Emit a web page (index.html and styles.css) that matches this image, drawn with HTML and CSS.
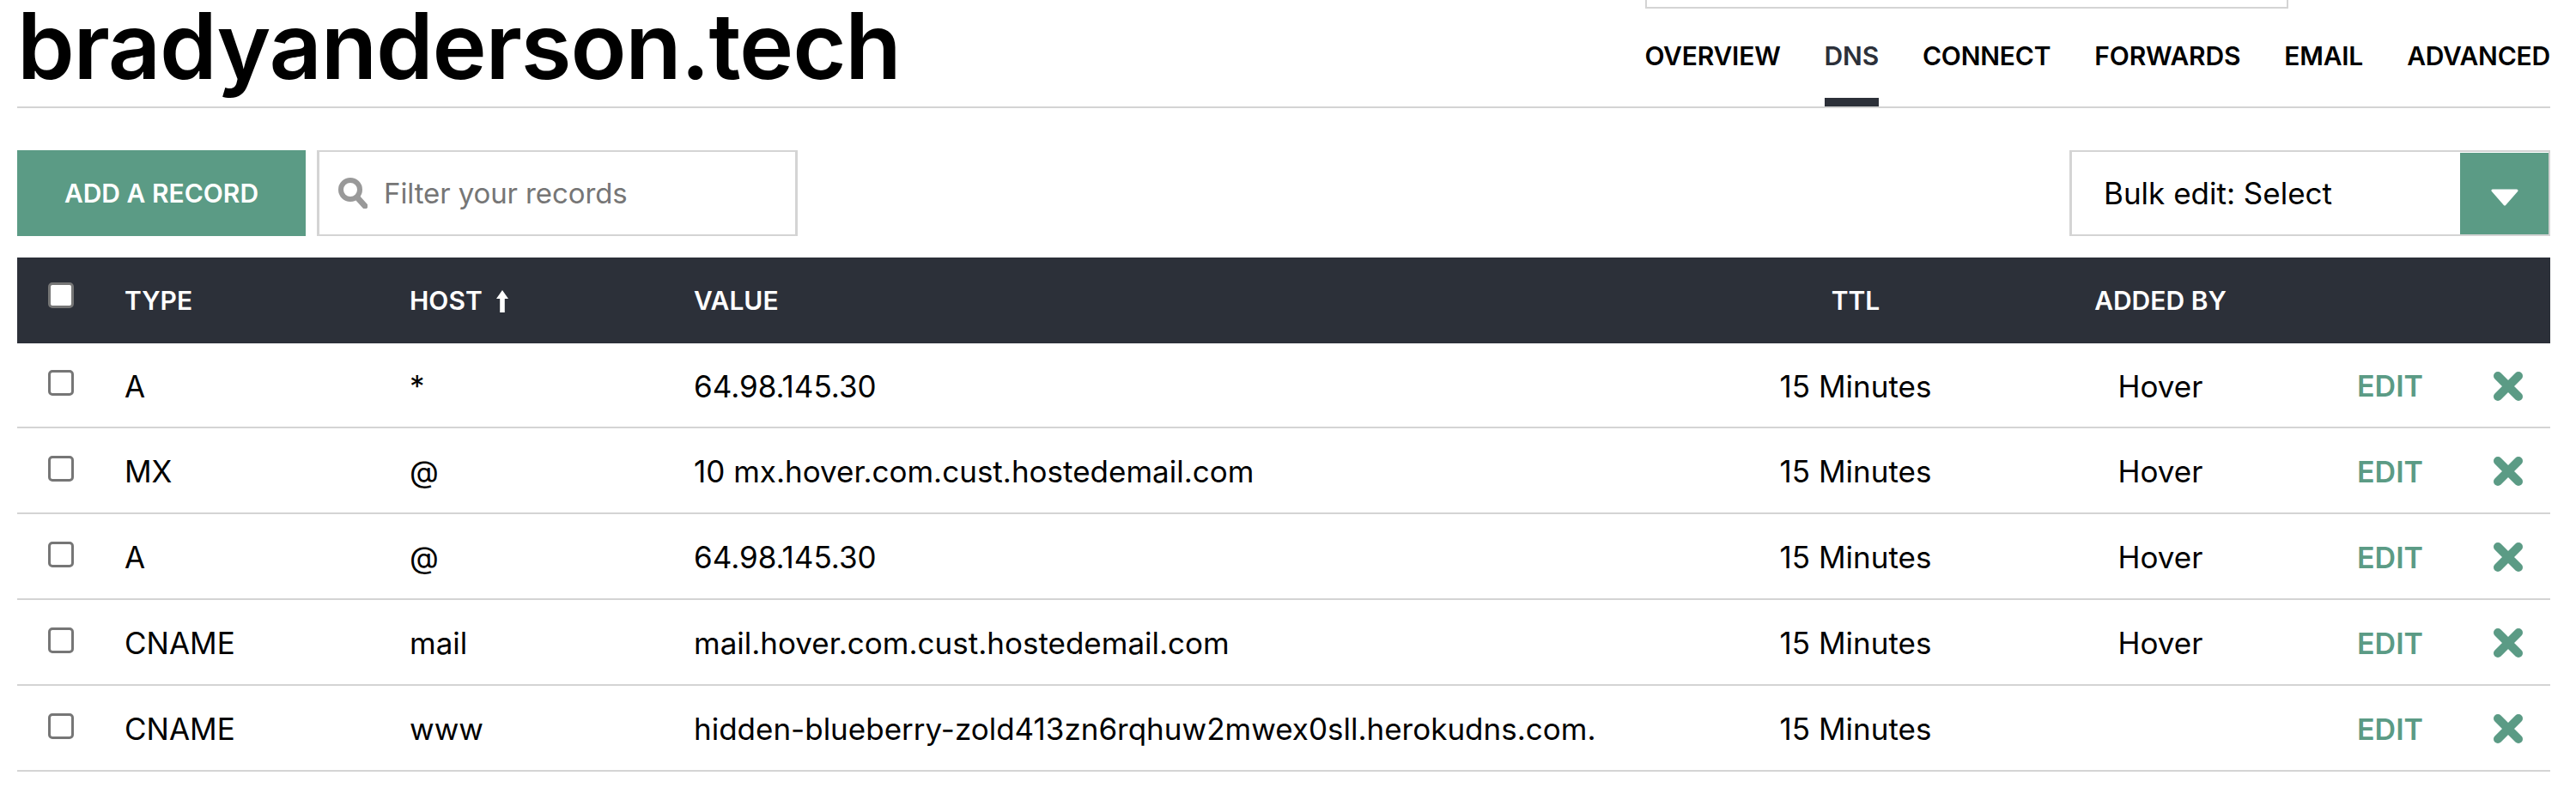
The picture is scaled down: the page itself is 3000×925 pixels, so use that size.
FILE: index.html
```html
<!DOCTYPE html>
<html lang="en">
  <head>
    <meta charset="UTF-8" />
    <title>DNS - bradyanderson.tech</title>
    <link rel="stylesheet" href="styles.css">
  </head>

  <body>
    <div class="wrap">
      <header class="top">
        <h1 class="domain">bradyanderson.tech</h1>
        <div class="top-right">
          <div class="top-search"></div>
          <nav class="tabs">
            <a class="tab">OVERVIEW</a>
            <a class="tab active">DNS</a>
            <a class="tab">CONNECT</a>
            <a class="tab">FORWARDS</a>
            <a class="tab">EMAIL</a>
            <a class="tab">ADVANCED</a>
          </nav>
        </div>
      </header>

      <div class="tools">
        <button class="add-btn">ADD A RECORD</button>
        <label class="filter">
          <svg class="search-icon" viewBox="0 0 34 36">
            <circle cx="14" cy="14" r="11" fill="none" stroke="#999" stroke-width="6" />
            <path d="M22 23 L31 33" fill="none" stroke="#999" stroke-width="7" stroke-linecap="round" />
          </svg>
          <input type="text" placeholder="Filter your records" />
        </label>
        <div class="bulk">
          <span class="bulk-label">Bulk edit: Select</span>
          <span class="bulk-arrow">
            <svg viewBox="0 0 34 20" width="34" height="20"><path d="M3 2 H31 L17 18 Z" fill="#fff" stroke="#fff" stroke-width="3" stroke-linejoin="round" /></svg>
          </span>
        </div>
      </div>

      <table class="records">
        <thead>
          <tr>
            <th class="col-check"><span class="check"></span></th>
            <th class="col-type">TYPE</th>
            <th class="col-host">HOST <span class="sort">
              <svg viewBox="0 0 16 26" width="16" height="26"><path d="M8 0 L15 10 H10.8 V26 H5.2 V10 H1 Z" fill="#fff" /></svg>
            </span></th>
            <th class="col-value">VALUE</th>
            <th class="col-ttl">TTL</th>
            <th class="col-by">ADDED BY</th>
            <th class="col-edit"></th>
            <th class="col-del"></th>
          </tr>
        </thead>
        <tbody>
          <tr>
            <td><span class="check"></span></td><td>A</td><td>*</td><td>64.98.145.30</td>
            <td class="mid">15 Minutes</td><td class="mid">Hover</td>
            <td class="edit">EDIT</td><td class="del"><svg class="x" viewBox="0 0 36 36"><path d="M6 6 L30 30 M30 6 L6 30" /></svg></td>
          </tr>
          <tr>
            <td><span class="check"></span></td><td>MX</td><td>@</td><td>10 mx.hover.com.cust.hostedemail.com</td>
            <td class="mid">15 Minutes</td><td class="mid">Hover</td>
            <td class="edit">EDIT</td><td class="del"><svg class="x" viewBox="0 0 36 36"><path d="M6 6 L30 30 M30 6 L6 30" /></svg></td>
          </tr>
          <tr>
            <td><span class="check"></span></td><td>A</td><td>@</td><td>64.98.145.30</td>
            <td class="mid">15 Minutes</td><td class="mid">Hover</td>
            <td class="edit">EDIT</td><td class="del"><svg class="x" viewBox="0 0 36 36"><path d="M6 6 L30 30 M30 6 L6 30" /></svg></td>
          </tr>
          <tr>
            <td><span class="check"></span></td><td>CNAME</td><td>mail</td><td>mail.hover.com.cust.hostedemail.com</td>
            <td class="mid">15 Minutes</td><td class="mid">Hover</td>
            <td class="edit">EDIT</td><td class="del"><svg class="x" viewBox="0 0 36 36"><path d="M6 6 L30 30 M30 6 L6 30" /></svg></td>
          </tr>
          <tr>
            <td><span class="check"></span></td><td>CNAME</td><td>www</td><td>hidden-blueberry-zold413zn6rqhuw2mwex0sll.herokudns.com.</td>
            <td class="mid">15 Minutes</td><td class="mid"></td>
            <td class="edit">EDIT</td><td class="del"><svg class="x" viewBox="0 0 36 36"><path d="M6 6 L30 30 M30 6 L6 30" /></svg></td>
          </tr>
        </tbody>
      </table>
    </div>
  </body>
</html>
```

FILE: styles.css
```css
* {
  box-sizing: border-box;
}
html,
body {
  margin: 0;
  background: #fff;
}
body {
  font-family: Inter, "Liberation Sans", sans-serif;
  color: #000;
}
.wrap {
  width: 2950px;
  margin-left: 20px;
}

/* header */
.top {
  height: 126px;
  display: flex;
  justify-content: space-between;
  border-bottom: 2px solid #d4d4d4;
}
.domain {
  margin: 0;
  font-size: 107px;
  font-weight: 600;
  line-height: 106px;
  letter-spacing: -1.2px;
}
.top-right {
  display: flex;
  flex-direction: column;
  align-items: flex-end;
  justify-content: space-between;
}
.top-search {
  width: 749px;
  height: 10px;
  margin-right: 305px;
  border: 2px solid #d4d4d4;
  border-top: 0;
}
.tabs {
  display: flex;
  gap: 51px;
}
.tab {
  display: block;
  height: 70px;
  font-size: 30px;
  font-weight: 600;
  line-height: 22px;
  letter-spacing: -0.2px;
  color: #000;
}
.tab.active {
  color: #2c3039;
  border-bottom: 10px solid #2c3039;
}

/* tools row */
.tools {
  display: flex;
  margin-top: 49px;
  height: 100px;
}
.add-btn {
  width: 336px;
  border: 0;
  background: #5b9b85;
  color: #fff;
  font-family: inherit;
  font-size: 30px;
  font-weight: 600;
}
.filter {
  width: 560px;
  margin-left: 13px;
  display: flex;
  align-items: center;
  border: 2px solid #d4d4d4;
  border-width: 2px 3px;
  padding-left: 22px;
}
.search-icon {
  width: 34px;
  height: 36px;
  flex: none;
}
.filter input {
  flex: 1;
  min-width: 0;
  margin-left: 19px;
  border: 0;
  outline: 0;
  padding: 0;
  font-family: inherit;
  font-size: 33px;
  letter-spacing: -0.1px;
}
.filter input::placeholder {
  color: #767676;
  opacity: 1;
}
.bulk {
  width: 560px;
  margin-left: auto;
  display: flex;
  justify-content: space-between;
  border: 2px solid #d4d4d4;
  border-left-width: 3px;
}
.bulk-label {
  padding-left: 37px;
  font-size: 35px;
  line-height: 96px;
}
.bulk-arrow {
  width: 103px;
  margin-top: 1px;
  padding-top: 8px;
  background: #5b9b85;
  display: flex;
  align-items: center;
  justify-content: center;
}

/* table */
.records {
  width: 100%;
  margin-top: 25px;
  border-collapse: separate;
  border-spacing: 0;
  table-layout: fixed;
}
.records th {
  height: 100px;
  padding: 0;
  background: #2c3039;
  color: #fff;
  font-size: 30px;
  font-weight: 600;
  text-align: left;
}
.records td {
  height: 100px;
  padding: 2px 0 0;
  border-bottom: 2px solid #d4d4d4;
  font-size: 35px;
}
.records tbody tr:first-child td {
  height: 99px;
}
.col-check { width: 125px; }
.col-type { width: 332px; }
.col-host { width: 331px; }
.col-value { width: 1220px; }
.col-ttl { width: 266px; }
.col-by { width: 444px; }
.col-edit { width: 137px; }
.records th.col-ttl,
.records th.col-by,
.records td.mid {
  text-align: center;
}
.sort svg {
  margin-left: 8px;
  vertical-align: -3px;
}
.check {
  display: block;
  width: 30px;
  height: 30px;
  margin: -7px 0 0 36px;
  border: 3px solid #767676;
  border-radius: 5px;
  background: #fff;
}
th .check {
  margin-top: -12px;
}
.records td.edit {
  padding-left: 7px;
  color: #5b9b85;
  font-size: 34px;
  font-weight: 600;
}
.x {
  display: block;
  width: 36px;
  height: 36px;
  margin-left: 28px;
  fill: none;
  stroke: #5b9b85;
  stroke-width: 10px;
  stroke-linecap: round;
}
```
